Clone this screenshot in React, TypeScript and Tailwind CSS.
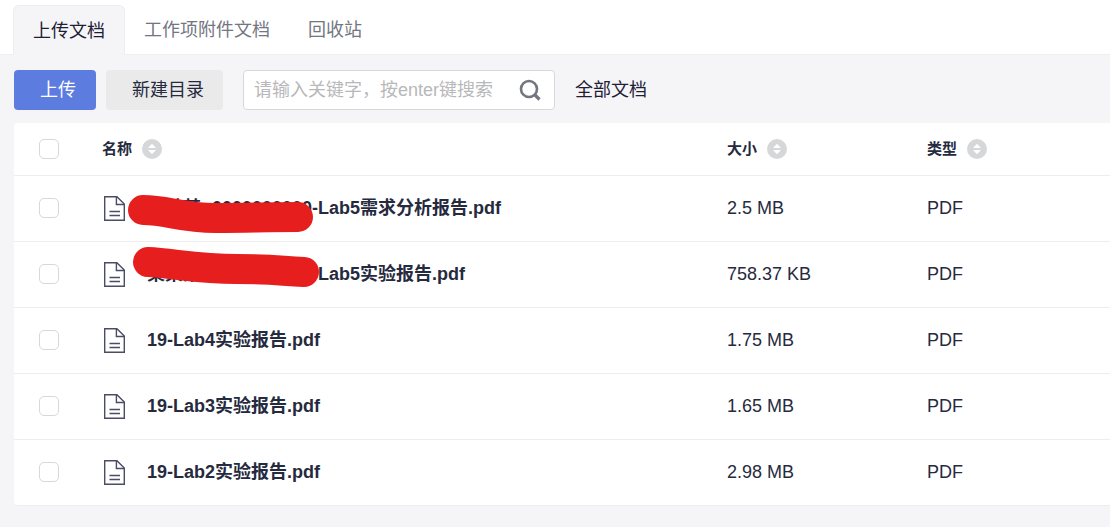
import React, { useState } from 'react';

interface DocFile {
  id: number;
  name: string;
  size: string;
  type: string;
  mark?: string;
}

const tabs = ['上传文档', '工作项附件文档', '回收站'];

const files: DocFile[] = [
  { id: 1, name: '某某某 -0000000000-Lab5需求分析报告.pdf', size: '2.5 MB', type: 'PDF', mark: 'M41 34C66 34 78 42 114 42S160 41 196 41' },
  { id: 2, name: '某某某 -0000000000-Lab5实验报告.pdf', size: '758.37 KB', type: 'PDF', mark: 'M46 20C70 21 96 27 135 27S178 29 202 30' },
  { id: 3, name: '19-Lab4实验报告.pdf', size: '1.75 MB', type: 'PDF' },
  { id: 4, name: '19-Lab3实验报告.pdf', size: '1.65 MB', type: 'PDF' },
  { id: 5, name: '19-Lab2实验报告.pdf', size: '2.98 MB', type: 'PDF' },
];

const checkboxClass =
  'block h-5 w-5 appearance-none rounded-[5px] border border-[#d8d8d8] bg-white checked:border-[#5d7ce0] checked:bg-[#5d7ce0]';

const FileIcon: React.FC = () => (
  <svg width="21" height="25" viewBox="0 0 21 25" fill="none" stroke="#4a4d64" strokeWidth="1.4" className="shrink-0" aria-hidden="true">
    <path d="M.7.7h12.2l7.4 7.4v16.2H.7z" />
    <path d="M12.4.7v7.8h7.9" />
    <path d="M5.5 15.5h10.5M5.5 19.5h10.5" />
  </svg>
);

const SortButton: React.FC<{ label: string }> = ({ label }) => (
  <button type="button" aria-label={label} className="h-5 w-5 rounded-full bg-[#d6d7d9]">
    <svg width="20" height="20" viewBox="0 0 20 20" fill="#fff" aria-hidden="true">
      <path d="M10 4.8 14 9H6zM10 15.2 6 11h8z" />
    </svg>
  </button>
);

const HeaderCell: React.FC<{ title: string }> = ({ title }) => (
  <div className="flex items-center gap-2.5">
    {title}
    <SortButton label={title} />
  </div>
);

const App: React.FC = () => {
  const [activeTab, setActiveTab] = useState(tabs[0]);
  const [selected, setSelected] = useState<number[]>([]);

  const toggle = (id: number) =>
    setSelected(prev => (prev.includes(id) ? prev.filter(i => i !== id) : [...prev, id]));

  return (
    <div className="min-h-screen bg-[#f5f5f8] pb-5 font-['Liberation_Sans','Noto_Sans_CJK_SC',sans-serif] text-lg text-[#262a3e]">
      <nav className="flex border-b border-[#ededf2] bg-white px-[13px] pt-[5px]">
        {tabs.map(tab => (
          <button
            key={tab}
            type="button"
            onClick={() => setActiveTab(tab)}
            className={`-mb-px h-[50px] px-[19px] ${
              activeTab === tab
                ? 'rounded-t-md border border-b-0 border-[#ededf2] bg-[#f5f5f8] text-[#1d2033]'
                : 'text-[#73767f]'
            }`}
          >
            {tab}
          </button>
        ))}
      </nav>

      <div className="flex items-center pt-[15px] pl-3.5">
        <button type="button" className="h-10 rounded bg-[#5d7ce0] pr-5 pl-[26px] text-white">
          上传
        </button>
        <button type="button" className="ml-2.5 h-10 rounded bg-[#eaeaea] pr-[19px] pl-[26px]">
          新建目录
        </button>
        <div className="ml-5 flex h-10 w-78 items-center rounded border border-[#d8d8db] bg-white pr-3 pl-2.5">
          <input
            type="text"
            aria-label="搜索"
            placeholder="请输入关键字，按enter键搜索"
            className="min-w-0 flex-1 outline-none placeholder:text-[#b8b8ba]"
          />
          <button type="button" aria-label="搜索">
            <svg width="24" height="24" viewBox="0 0 24 24" fill="none" stroke="#737680" strokeWidth="2.6" aria-hidden="true">
              <circle cx="11" cy="11" r="8" />
              <path d="m16.5 16.5 5 5" strokeWidth="3.2" />
            </svg>
          </button>
        </div>
        <a href="#all" className="ml-5 text-[#1d2033]">全部文档</a>
      </div>

      <div className="mt-[13px] ml-3.5 overflow-hidden rounded-l border-b border-[#ededf0] bg-white">
        <table className="w-full table-fixed border-collapse text-left">
          <thead>
            <tr className="h-[52px] border-b border-[#ededf0] text-[15px]">
              <th className="w-[88px] pl-[25px]">
                <input
                  type="checkbox"
                  aria-label="全选"
                  className={checkboxClass}
                  checked={selected.length === files.length}
                  onChange={e => setSelected(e.target.checked ? files.map(f => f.id) : [])}
                />
              </th>
              <th><HeaderCell title="名称" /></th>
              <th className="w-[200px]"><HeaderCell title="大小" /></th>
              <th className="w-[183px]"><HeaderCell title="类型" /></th>
            </tr>
          </thead>
          <tbody>
            {files.map(file => (
              <tr key={file.id} className="h-[66px] border-b border-[#ededf0] last:border-b-0">
                <td className="pl-[25px]">
                  <input
                    type="checkbox"
                    aria-label={file.name}
                    className={checkboxClass}
                    checked={selected.includes(file.id)}
                    onChange={() => toggle(file.id)}
                  />
                </td>
                <td className="relative">
                  <div className="flex items-center gap-[22px] pl-[2px] font-bold">
                    <FileIcon />
                    {file.name}
                  </div>
                  {file.mark && (
                    <svg width="240" height="66" viewBox="0 0 240 66" className="pointer-events-none absolute top-0 left-0" aria-hidden="true">
                      <path d={file.mark} fill="none" stroke="#e61e1e" strokeWidth="30" strokeLinecap="round" />
                    </svg>
                  )}
                </td>
                <td>{file.size}</td>
                <td>{file.type}</td>
              </tr>
            ))}
          </tbody>
        </table>
      </div>
    </div>
  );
};

export default App;
